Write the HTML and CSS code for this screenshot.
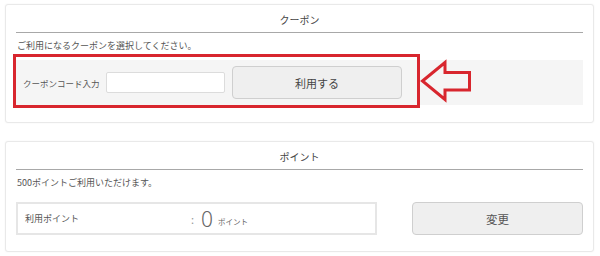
FILE: index.html
```html
<!DOCTYPE html>
<html lang="ja">
<head>
<meta charset="utf-8">
<link rel="stylesheet" href="styles.css">
</head>
<body>
<div class="page">
  <section class="card card-coupon">
    <h2 class="card-title">クーポン</h2>
    <p class="desc">ご利用になるクーポンを選択してください。</p>
    <div class="coupon-row">
      <label class="coupon-label">クーポンコード入力</label>
      <input class="coupon-input" type="text">
      <button class="btn btn-use">利用する</button>
    </div>
  </section>
  <section class="card card-point">
    <h2 class="card-title">ポイント</h2>
    <p class="desc">500ポイントご利用いただけます。</p>
    <div class="point-row">
      <div class="point-field">
        <span class="point-label">利用ポイント</span>
        <span class="point-colon">:</span>
        <span class="point-value">0</span>
        <span class="point-unit">ポイント</span>
      </div>
      <button class="btn btn-change">変更</button>
    </div>
  </section>
  <div class="highlight"></div>
  <svg class="arrow" width="56" height="46" viewBox="418 58 56 46">
    <polygon points="422.5,81 445,62.5 445,72.5 469.5,72.5 469.5,90 445,90 445,99.5" fill="none" stroke="#d8262e" stroke-width="3" stroke-linejoin="miter"/>
  </svg>
</div>
</body>
</html>
```

FILE: styles.css
```css
* { box-sizing: border-box; }
html, body { margin: 0; padding: 0; background: #fff; }
body {
  font-family: "Noto Sans CJK JP", "Noto Sans", sans-serif;
  color: #444;
}
.page {
  position: relative;
  width: 600px;
  height: 256px;
  padding-top: 4px;
}
.card {
  margin: 0 6px 0 5px;
  border: 1px solid #e9e9e9;
  border-radius: 3px;
  box-shadow: 0 0 2px rgba(0,0,0,0.06);
  padding: 0 10px;
  background: #fff;
}
.card-coupon { height: 119px; }
.card-point { margin-top: 18px; height: 111px; }
.card-title {
  margin: 0;
  padding: 7px 0 4px;
  font-size: 10px;
  line-height: 16px;
  font-weight: normal;
  text-align: center;
  color: #444;
  border-bottom: 1px solid #a8a8a8;
}
.desc {
  margin: 6px 0 0 1px;
  font-size: 9px;
  line-height: 14px;
  color: #555;
}
.coupon-row {
  margin-top: 7px;
  height: 45px;
  background: #f5f5f5;
  display: flex;
  align-items: center;
  padding-left: 7px;
}
.coupon-label {
  font-size: 8.5px;
  width: 77px;
  color: #555;
  white-space: nowrap;
}
.coupon-input {
  margin-left: 6px;
  width: 119px;
  height: 21px;
  border: 1px solid #dcdcdc;
  border-radius: 2px;
  background: #fff;
  padding: 0;
}
.btn {
  font-family: "Noto Sans CJK JP", "Noto Sans", sans-serif;
  background: #efefef;
  border: 1px solid #cfcfcf;
  border-radius: 4px;
  color: #444;
  padding: 0;
}
.btn-use {
  margin-left: 7px;
  width: 170px;
  height: 33px;
  font-size: 11px;
}
.point-row {
  margin-top: 12px;
  display: flex;
  justify-content: space-between;
  align-items: center;
}
.point-field {
  width: 361px;
  height: 33px;
  border: 2px solid #e6e6e6;
  display: flex;
  align-items: center;
  padding-left: 7px;
  color: #555;
}
.point-label {
  width: 166px;
  font-size: 9px;
}
.point-colon {
  font-size: 11px;
  color: #999;
  width: 10px;
}
.point-value {
  font-family: "Noto Sans", sans-serif;
  font-size: 21px;
  font-weight: 300;
  color: #666;
  line-height: 1;
  margin-top: 1px;
}
.point-unit {
  margin-left: 5px;
  font-size: 7.5px;
  color: #666;
  margin-top: 5px;
}
.btn-change {
  width: 171px;
  height: 33px;
  font-size: 11.5px;
  color: #555;
}
.highlight {
  position: absolute;
  left: 13px;
  top: 54px;
  width: 407px;
  height: 54px;
  border: 3px solid #d8262e;
}
.arrow {
  position: absolute;
  left: 418px;
  top: 58px;
}
```
